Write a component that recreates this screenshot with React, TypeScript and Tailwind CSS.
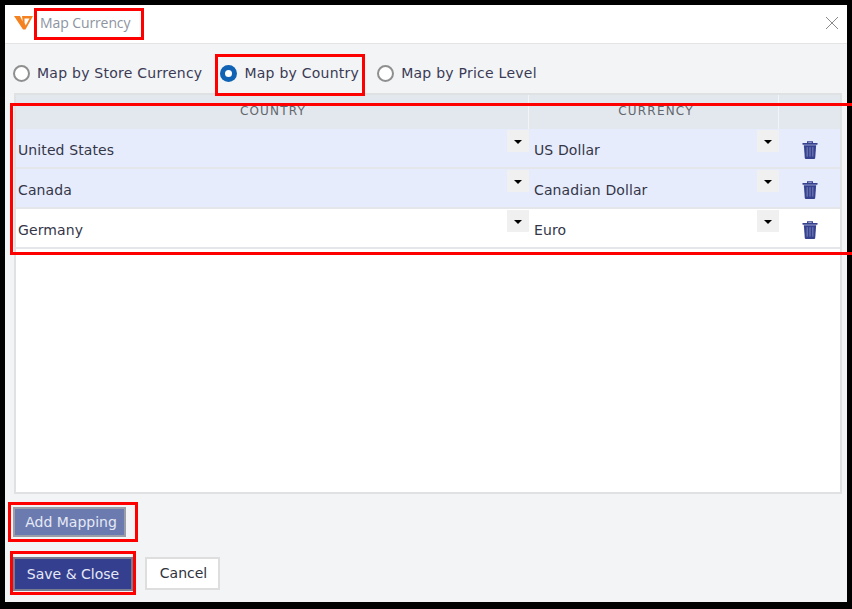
const rows = [
  { country: "United States", currency: "US Dollar", alt: true },
  { country: "Canada", currency: "Canadian Dollar", alt: true },
  { country: "Germany", currency: "Euro", alt: false },
];

const fontDv = "font-['DejaVu_Sans',sans-serif]";

function Logo() {
  return (
    <svg width="20" height="15" viewBox="0 0 20 15" className="shrink-0">
      <path d="M0 1 L6 1 L8.7 6.5 L8 1 L19 1 L11.5 14.5 L9 14.5 Z" fill="#f58220" />
      <path d="M10.5 3.5 L15.5 3.5 L11.7 10.5 L10.6 8 Z" fill="#fff" />
    </svg>
  );
}

function Radio({ checked, label }: { checked?: boolean; label: string }) {
  return (
    <label className="flex items-center gap-[7px] shrink-0">
      {checked ? (
        <span className="w-[17px] h-[17px] shrink-0 rounded-full bg-[#0f62b4] flex items-center justify-center">
          <span className="w-[7px] h-[7px] rounded-full bg-white" />
        </span>
      ) : (
        <span className="w-[17px] h-[17px] shrink-0 rounded-full border-2 border-[#8f8f8f] bg-white" />
      )}
      <span className="text-[14px] text-[#3b3a55] tracking-[0.25px] whitespace-nowrap">{label}</span>
    </label>
  );
}

function Arrow() {
  return (
    <span className="absolute right-0 top-px w-[22px] h-[22px] bg-[#f0f0f0] flex items-center justify-center pt-px">
      <span className="w-0 h-0 border-x-[4px] border-x-transparent border-t-[4px] border-t-black" />
    </span>
  );
}

function Trash() {
  return (
    <svg width="16" height="18" viewBox="0 0 16 19" className="block">
      <path d="M5.5 2 V1 H10.5 V2" fill="none" stroke="#36428f" strokeWidth="1.3" />
      <rect x="0" y="2" width="16" height="2" rx="0.5" fill="#36428f" />
      <path d="M1.5 4.5 H14.5 L13.5 18 Q13.4 19 12.4 19 H3.6 Q2.6 19 2.5 18 Z" fill="#36428f" />
      <path d="M5 6.5 V16.5 M8 6.5 V16.5 M11 6.5 V16.5" stroke="#7f88bd" strokeWidth="1" />
    </svg>
  );
}

function RedBox({ className }: { className: string }) {
  return <div className={`absolute border-[3px] border-[#f00] pointer-events-none ${className}`} />;
}

export default function App() {
  return (
    <div className={`relative w-[852px] h-[609px] bg-black pt-[5px] pr-[5px] pb-[7px] pl-[5px] overflow-hidden ${fontDv}`}>
      <div className="w-full h-full bg-[#f2f4f6] flex flex-col">
        <div className="h-[39px] shrink-0 bg-white border-b border-[#e4e4e4] flex items-center pl-[9px] pr-[8px] pb-[3px]">
          <Logo />
          <span className="ml-[6px] text-[14px] tracking-[-0.1px] text-[#8d94a0] font-['Open_Sans',sans-serif]">Map Currency</span>
          <svg width="14" height="14" viewBox="0 0 14 14" className="ml-auto">
            <path d="M1 1 L13 13 M13 1 L1 13" stroke="#8a8a8a" strokeWidth="1" />
          </svg>
        </div>

        <div className="h-[49px] shrink-0 flex items-center pl-[8px] gap-[18px] pt-[9px]">
          <Radio label="Map by Store Currency" />
          <Radio checked label="Map by Country" />
          <Radio label="Map by Price Level" />
        </div>

        <div className="ml-[9px] w-[828px] h-[401px] border-2 border-[#dfe1e3] bg-white flex flex-col">
          <div className="h-[34px] shrink-0 bg-[#e3e8ee] flex text-[12px] tracking-[1.2px] text-[#62666c]">
            <div className="w-[513px] pt-[7px] pl-[2px] text-center border-r border-[#f2f4f6]">COUNTRY</div>
            <div className="w-[250px] pt-[7px] pl-[5px] text-center border-r border-[#f2f4f6]">CURRENCY</div>
            <div className="flex-1" />
          </div>
          {rows.map((r) => (
            <div
              key={r.country}
              className={`h-[40px] shrink-0 flex border-b-2 border-[#e4e6e9] text-[14px] tracking-[0.1px] text-[#343648] ${r.alt ? "bg-[#e7ecfd]" : "bg-white"}`}
            >
              <div className="relative w-[513px] pl-[2px] pt-[11px]">
                {r.country}
                <Arrow />
              </div>
              <div className="relative w-[250px] pl-[5px] pt-[11px]">
                {r.currency}
                <Arrow />
              </div>
              <div className="flex-1 pl-[23px] pt-[12px]">
                <Trash />
              </div>
            </div>
          ))}
        </div>

        <div className="ml-[8px] mt-[13px]">
          <button className="w-[113px] h-[30px] pl-[3px] bg-[#6b7bb0] border-2 border-[#9a9ea8] text-[14px] text-[#e6e9f5]">
            Add Mapping
          </button>
        </div>

        <div className="ml-[8px] mt-[20px] flex items-start gap-[12px]">
          <button className="w-[120px] h-[34px] bg-[#343f8f] border-2 border-[#777c90] text-[14px] text-[#e6e9f5]">
            Save &amp; Close
          </button>
          <button className="w-[75px] h-[33px] pl-[2px] bg-white border-2 border-[#dedede] text-[14px] text-[#30323c]">
            Cancel
          </button>
        </div>
      </div>

      <RedBox className="left-[34px] top-[8px] w-[110px] h-[32px]" />
      <RedBox className="left-[215px] top-[54px] w-[150px] h-[42px]" />
      <RedBox className="left-[10px] top-[103px] w-[842px] h-[152px] border-r-0" />
      <RedBox className="left-[8px] top-[502px] w-[130px] h-[40px]" />
      <RedBox className="left-[10px] top-[551px] w-[126px] h-[44px]" />
    </div>
  );
}
